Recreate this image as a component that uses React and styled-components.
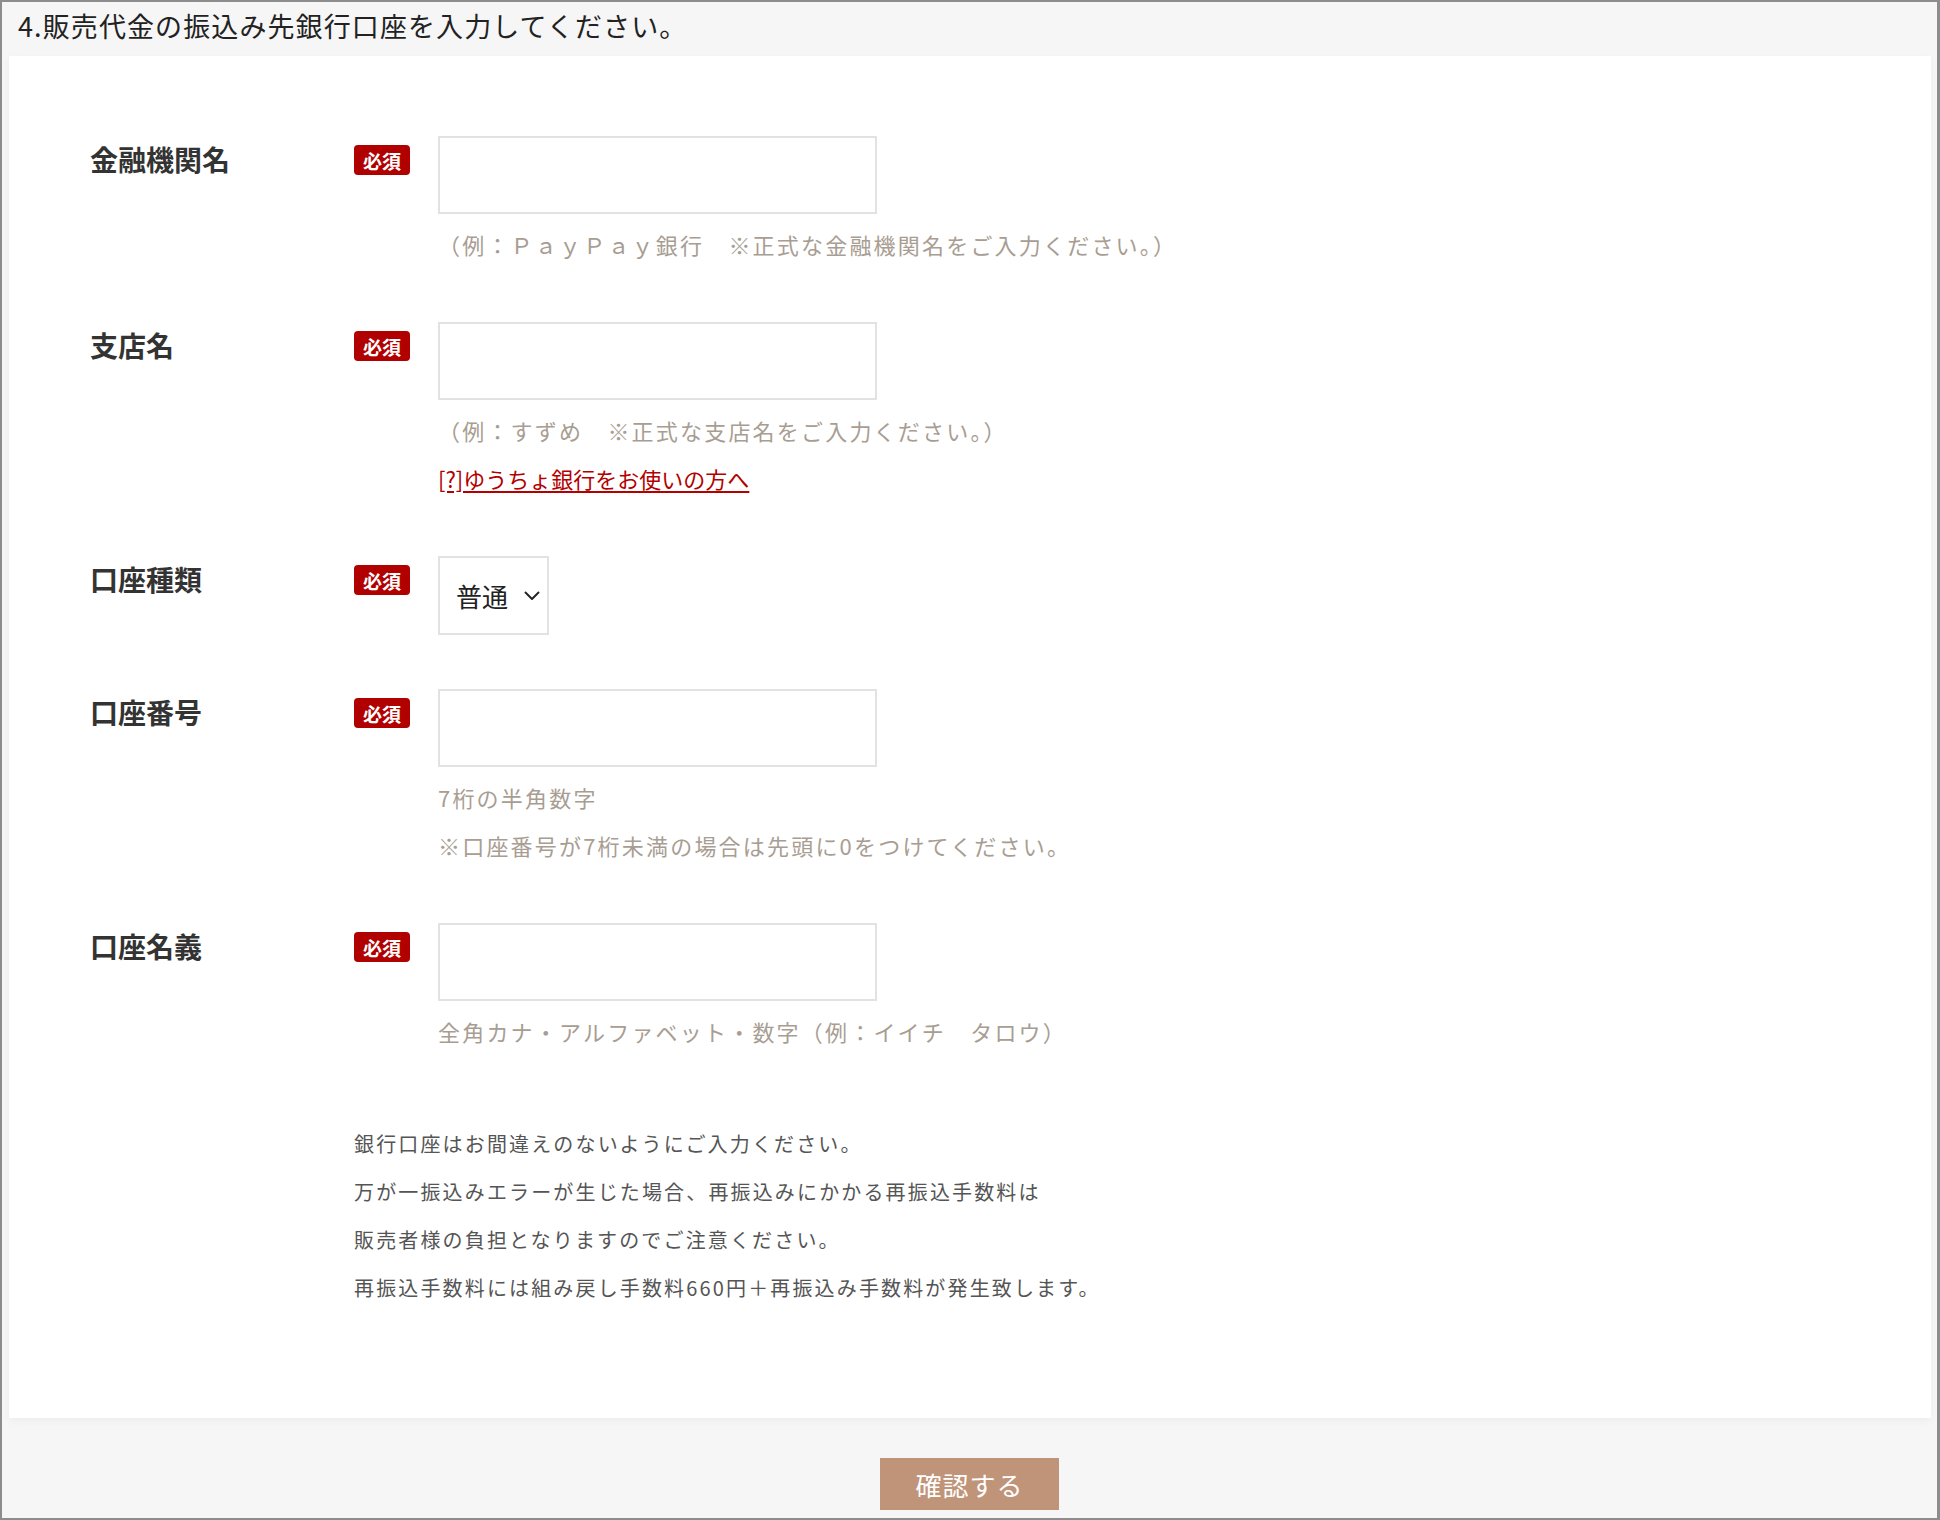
import React from "react";
import styled, { createGlobalStyle } from "styled-components";

const Global = createGlobalStyle`
  html, body { margin: 0; padding: 0; background: #f6f6f6; }
  body { font-family: "Noto Sans CJK JP", "Noto Sans", sans-serif; }
  * { box-sizing: border-box; }
`;

const Frame = styled.div`
  width: 1940px;
  height: 1520px;
  border: 2px solid #8d8d8d;
  border-right-width: 3px;
  background: #f6f6f6;
  overflow: hidden;
  display: flex;
  flex-direction: column;
`;

const Header = styled.h2`
  margin: 0;
  height: 54px;
  padding: 0 0 8px 16px;
  display: flex;
  align-items: center;
  font-size: 27px;
  font-weight: 400;
  letter-spacing: 1.1px;
  color: #222;
`;

const Panel = styled.div`
  margin: 0 6px 0 7px;
  background: #fff;
  padding: 80px 80px 106px 81px;
  box-shadow: 0 3px 8px rgba(0, 0, 0, 0.04);
`;

const Rows = styled.div`
  display: flex;
  flex-direction: column;
  gap: 54px;
`;

const Row = styled.div`
  display: grid;
  grid-template-columns: 264px 84px 1fr;
  align-items: start;
`;

const Label = styled.div`
  font-size: 28px;
  font-weight: 700;
  color: #333;
  line-height: 40px;
  margin-top: 3px;
`;

const Badge = styled.span`
  justify-self: start;
  margin-top: 9px;
  width: 56px;
  height: 30px;
  border-radius: 4px;
  background: #b00000;
  color: #fff;
  font-size: 19px;
  font-weight: 700;
  display: flex;
  align-items: center;
  justify-content: center;
`;

const Field = styled.div`
  display: flex;
  flex-direction: column;
  align-items: flex-start;
`;

const TextInput = styled.input`
  width: 439px;
  height: 78px;
  border: 2px solid #e2e2e2;
  background: #fff;
  outline: none;
  font-size: 24px;
  padding: 0 16px;
  font-family: inherit;
`;

const Hint = styled.div`
  font-size: 22px;
  letter-spacing: 2.2px;
  line-height: 48px;
  color: #a89d92;
  margin-top: ${(p) => (p.$first ? "6px" : "0")};
  white-space: nowrap;
`;

const HelpLink = styled.a`
  font-size: 22px;
  line-height: 48px;
  color: #b30000;
  text-decoration: underline;
  text-underline-offset: 3px;
  white-space: nowrap;
`;

const SelectBox = styled.div`
  width: 111px;
  height: 79px;
  border: 2px solid #e2e2e2;
  background: #fff;
  display: flex;
  align-items: center;
  padding-left: 16px;
  gap: 16px;
  font-size: 26px;
  color: #222;
`;

const Chevron = () => (
  <svg width="16" height="10" viewBox="0 0 16 10" fill="none">
    <path d="M1.5 1.5 L8 8 L14.5 1.5" stroke="#222" strokeWidth="1.9" strokeLinecap="round" strokeLinejoin="round" />
  </svg>
);

const Notes = styled.div`
  margin-top: 65px;
  padding-left: 264px;
`;

const NoteLine = styled.p`
  margin: 0;
  font-size: 20px;
  letter-spacing: 2.15px;
  line-height: 48px;
  color: #555;
  white-space: nowrap;
`;

const Footer = styled.div`
  display: flex;
  justify-content: center;
  padding-top: 40px;
`;

const Button = styled.button`
  width: 179px;
  height: 52px;
  border: none;
  background: #c09479;
  color: #fff;
  font-family: inherit;
  font-size: 26px;
  letter-spacing: 1px;
  cursor: pointer;
`;

const Req = () => <Badge>必須</Badge>;

export default function App() {
  return (
    <>
      <Global />
      <Frame>
        <Header>4.販売代金の振込み先銀行口座を入力してください。</Header>
        <Panel>
          <Rows>
            <Row>
              <Label>金融機関名</Label>
              <Req />
              <Field>
                <TextInput type="text" />
                <Hint $first>（例：ＰａｙＰａｙ銀行　※正式な金融機関名をご入力ください。）</Hint>
              </Field>
            </Row>
            <Row>
              <Label>支店名</Label>
              <Req />
              <Field>
                <TextInput type="text" />
                <Hint $first>（例：すずめ　※正式な支店名をご入力ください。）</Hint>
                <HelpLink href="#">[?]ゆうちょ銀行をお使いの方へ</HelpLink>
              </Field>
            </Row>
            <Row>
              <Label>口座種類</Label>
              <Req />
              <Field>
                <SelectBox>
                  <span>普通</span>
                  <Chevron />
                </SelectBox>
              </Field>
            </Row>
            <Row>
              <Label>口座番号</Label>
              <Req />
              <Field>
                <TextInput type="text" />
                <Hint $first>7桁の半角数字</Hint>
                <Hint>※口座番号が7桁未満の場合は先頭に0をつけてください。</Hint>
              </Field>
            </Row>
            <Row>
              <Label>口座名義</Label>
              <Req />
              <Field>
                <TextInput type="text" />
                <Hint $first>全角カナ・アルファベット・数字（例：イイチ　タロウ）</Hint>
              </Field>
            </Row>
          </Rows>
          <Notes>
            <NoteLine>銀行口座はお間違えのないようにご入力ください。</NoteLine>
            <NoteLine>万が一振込みエラーが生じた場合、再振込みにかかる再振込手数料は</NoteLine>
            <NoteLine>販売者様の負担となりますのでご注意ください。</NoteLine>
            <NoteLine>再振込手数料には組み戻し手数料660円＋再振込み手数料が発生致します。</NoteLine>
          </Notes>
        </Panel>
        <Footer>
          <Button type="button">確認する</Button>
        </Footer>
      </Frame>
    </>
  );
}
